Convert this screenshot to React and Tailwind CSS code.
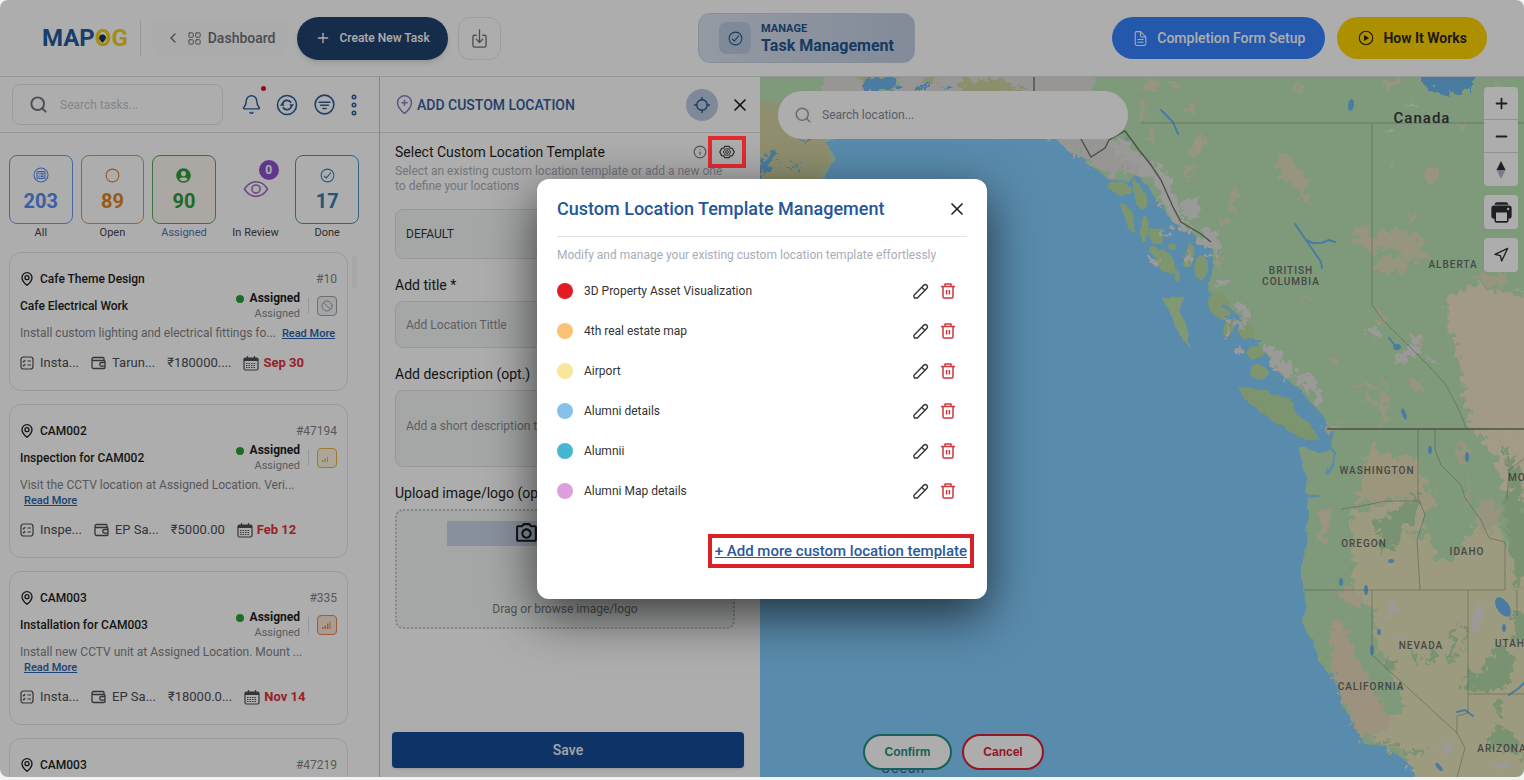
import React, { useState } from 'react';
import { Ban, Bell, ChevronLeft, Info, LayoutGrid, Locate, MapPin, MapPinPlusInside, Minus, Navigation, Plus, Search, X } from 'lucide-react';
import {
    IoCheckmarkCircleOutline,
    IoDocumentTextOutline,
    IoDownloadOutline,
    IoEllipseOutline,
    IoEyeOutline,
    IoFilterCircleOutline,
    IoPlayCircleOutline,
    IoPrint,
} from 'react-icons/io5';
import { FaUserCircle } from 'react-icons/fa';
import { MdOutlineCameraAlt } from 'react-icons/md';

const stats = [
    { label: 'All', count: 203, color: 'text-[#5b8def]', border: 'border-[#6c9ae6]', icon: 'list' },
    { label: 'Open', count: 89, color: 'text-[#e08428]', border: 'border-[#e2954f]', icon: 'open' },
    { label: 'Assigned', count: 90, color: 'text-[#2f9e3a]', border: 'border-[#54a85c] bg-[#fdf6f0]', icon: 'user', active: true },
    { label: 'In Review', count: 0, color: 'text-[#a070c8]', border: 'border-transparent', icon: 'eye' },
    { label: 'Done', count: 17, color: 'text-[#337fb5]', border: 'border-[#4a92be]', icon: 'check' },
];

const tasks = [
    { place: 'Cafe Theme Design', id: '#10', title: 'Cafe Electrical Work', desc: 'Install custom lighting and electrical fittings fo...', inline: true, type: 'Insta...', owner: 'Tarun...', cost: '₹180000....', date: 'Sep 30', priority: 'none' },
    { place: 'CAM002', id: '#47194', title: 'Inspection for CAM002', desc: 'Visit the CCTV location at Assigned Location. Veri...', type: 'Inspe...', owner: 'EP Sa...', cost: '₹5000.00', date: 'Feb 12', priority: 'medium' },
    { place: 'CAM003', id: '#335', title: 'Installation for CAM003', desc: 'Install new CCTV unit at Assigned Location. Mount ...', type: 'Insta...', owner: 'EP Sa...', cost: '₹18000.0...', date: 'Nov 14', priority: 'high' },
    { place: 'CAM003', id: '#47219' },
];

const templates = [
    { name: '3D Property Asset Visualization', dot: 'bg-[#e31b23]' },
    { name: '4th real estate map', dot: 'bg-[#f9c274]' },
    { name: 'Airport', dot: 'bg-[#f9e59c]' },
    { name: 'Alumni details', dot: 'bg-[#85c1e9]' },
    { name: 'Alumnii', dot: 'bg-[#45b7d1]' },
    { name: 'Alumni Map details', dot: 'bg-[#dda0dd]' },
];

const SyncCircleIcon = () => (
    <svg width="22" height="22" viewBox="0 0 22 22" fill="none" stroke="currentColor" strokeWidth="1.6">
        <circle cx="11" cy="11" r="9.5" />
        <path d="M6.5 10.500a4.600 4.600 0 0 1 8.600-1.800M15.500 11.500a4.600 4.600 0 0 1-8.600 1.800" strokeWidth="1.8" />
        <path d="M13.300 10.300h4.900l-2.400 3zM8.700 11.700H3.800l2.400-3z" fill="currentColor" stroke="none" />
    </svg>
);

const DotsIcon = () => (
    <svg width="6" height="22" viewBox="0 0 6 22" fill="none" stroke="currentColor" strokeWidth="1.6">
        <circle cx="3" cy="3" r="1.700" />
        <circle cx="3" cy="11" r="1.700" />
        <circle cx="3" cy="19" r="1.700" />
    </svg>
);

const ListCircleIcon = () => (
    <svg width="16" height="16" viewBox="0 0 16 16" fill="none" stroke="currentColor" strokeWidth="1.100">
        <circle cx="8" cy="8" r="7" />
        <rect x="4" y="4.600" width="8" height="6.800" rx="1" />
        <path d="M5.500 6.500h1M7.500 6.500h3.200M5.500 8h1M7.500 8h3.200M5.500 9.500h1M7.500 9.500h3.200" />
    </svg>
);

const ChecklistIcon = () => (
    <svg width="14" height="14" viewBox="0 0 14 14" fill="none" stroke="currentColor" strokeWidth="1.200" className="shrink-0">
        <rect x="1" y="1" width="12" height="12" rx="2.500" />
        <path d="M3 5l.8.8 1.500-1.600M3 9l.8.8 1.500-1.600M7.500 5H11M7.500 9H11" />
    </svg>
);

const WalletIcon = () => (
    <svg width="15" height="14" viewBox="0 0 15 14" fill="none" stroke="currentColor" strokeWidth="1.300" className="shrink-0">
        <path d="M13 4V2.500a1 1 0 0 0-1-1H2.500a1.500 1.500 0 0 0 0 3H13a1 1 0 0 1 1 1v6a1 1 0 0 1-1 1H2.500A1.500 1.500 0 0 1 1 11V3" />
        <path d="M14 6.500h-3.500a1.800 1.800 0 0 0 0 3.600H14" />
    </svg>
);

const CalendarIcon = () => (
    <svg width="16" height="15" viewBox="0 0 16 15" fill="none" stroke="currentColor" strokeWidth="1.200" className="shrink-0">
        <rect x="1" y="2" width="14" height="12" rx="1.500" />
        <path d="M1.500 2.500h13v2h-13z" fill="currentColor" />
        <path d="M4.500 0v3M11.500 0v3" />
        <path d="M3 7.500h10M3 9.500h10M3 11.500h10" strokeDasharray="1.500 1" strokeWidth="1" />
    </svg>
);

const PinIcon = () => (
    <svg width="14" height="14" viewBox="0 0 14 14" fill="none" stroke="currentColor" strokeWidth="1.300" className="shrink-0">
        <path d="M7 13.300C4.500 11.200 2 8.700 2 5.700a5 5 0 0 1 10 0c0 3-2.500 5.500-5 7.600z" />
        <circle cx="7" cy="5.700" r="2" />
    </svg>
);

const GearIcon = () => (
    <svg width="16" height="16" viewBox="0 0 16 16" fill="none" stroke="currentColor" strokeWidth="1.300" strokeLinejoin="round">
        <path d="M5.800 2.300h4.400l1 1.900 2.100.1 1.900 3.700-1.900 3.700-2.100.1-1 1.900H5.800l-1-1.900-2.100-.1L.8 8l1.900-3.700 2.100-.1z" />
        <path d="M6.200 4.900h3.600L11.600 8l-1.800 3.100H6.200L4.400 8z" strokeWidth="1" />
        <circle cx="8" cy="8" r="1.400" strokeWidth="1" />
    </svg>
);

const PencilIcon = () => (
    <svg width="16" height="16" viewBox="0 0 16 16" fill="none" stroke="currentColor" strokeWidth="1.400" strokeLinejoin="round">
        <path d="M1 12.200l9.700-10a2.200 2.200 0 0 1 3.200 3.100L4.300 15H2.200A1.200 1.200 0 0 1 1 13.800z" />
        <path d="M8.700 4.300l3.200 3.100" />
    </svg>
);

const TrashIcon = () => (
    <svg width="14" height="16" viewBox="0 0 14 16" fill="none" stroke="currentColor" strokeWidth="1.500" strokeLinejoin="round">
        <path d="M0 3.500h14M2 3.500V14a1 1 0 0 0 1 1h8a1 1 0 0 0 1-1V3.500M4 3.500V1h6v2.500M5.600 7v4.500M8.400 7v4.500" />
    </svg>
);

const StatIcon = ({ name }) => {
    if (name === 'list') return <ListCircleIcon />;
    if (name === 'open') return <IoEllipseOutline size={17} />;
    if (name === 'user') return <FaUserCircle size={15} />;
    return <IoCheckmarkCircleOutline size={17} />;
};

const PriorityBadge = ({ level }) => {
    if (level === 'none') {
        return (
            <span className="flex size-5 items-center justify-center rounded border border-[#a0a3a8] bg-[#f2f3f5] text-[#a0a3a8]">
                <Ban size={12} />
            </span>
        );
    }
    const tone = level === 'high' ? 'border-[#e58a55] bg-[#fce6d8] text-[#e58a55]' : 'border-[#e6b548] bg-[#fdf5df] text-[#e6b548]';
    return (
        <span className={`flex size-5 items-center justify-center rounded border ${tone}`}>
            <svg width="12" height="12" viewBox="0 0 12 12" fill="currentColor">
                <rect x="1" y="8" width="1.500" height="2" />
                <rect x="3.500" y="6.500" width="1.500" height="3.500" />
                {level === 'high' ? <rect x="6" y="4.500" width="1.500" height="5.500" /> : <rect x="6" y="5" width="1" height="5" />}
                {level === 'high' && <rect x="8.500" y="2.500" width="1" height="7.500" />}
            </svg>
        </span>
    );
};

const TaskCard = ({ task }) => (
    <article className="shrink-0 rounded-xl border border-[#e3e5e8] px-[10px] pt-[18px] pb-[17px] text-[#1c1e21]">
        <div className="flex h-4 items-center">
            <PinIcon />
            <h3 className="ml-1.5 flex-1 text-xs font-medium">{task.place}</h3>
            <span className="text-xs text-[#7f8287]">{task.id}</span>
        </div>
        {task.title && (
            <>
                <div className="mt-1 flex items-center">
                    <p className="flex-1 text-xs font-medium">{task.title}</p>
                    <div className="text-right leading-[15px]">
                        <p className="flex items-center justify-end gap-1.5 text-xs leading-[15px] font-bold">
                            <span className="size-2 rounded-full bg-[#2ba335]" />
                            Assigned
                        </p>
                        <p className="text-[11px] text-[#85888c]">Assigned</p>
                    </div>
                    <span className="mx-2 h-4 w-px bg-[#dcdfe3]" />
                    <PriorityBadge level={task.priority} />
                </div>
                <p className="mt-[5px] text-xs leading-[15px] whitespace-nowrap text-[#7f8287]">
                    {task.desc}
                    {!task.inline && <br />}
                    <a href="#read-more" className={`text-[11px] font-medium text-[#2b62ad] underline ${task.inline ? 'ml-1.5' : 'ml-1'}`}>Read More</a>
                </p>
                <div className="mt-3 flex h-5 items-center text-[13px] text-[#4b4e55]">
                    <ChecklistIcon />
                    <span className="mr-3 ml-1.5">{task.type}</span>
                    <WalletIcon />
                    <span className="mr-3 ml-1.5">{task.owner}</span>
                    <span className="mr-3">{task.cost}</span>
                    <CalendarIcon />
                    <span className="ml-1 font-bold text-[#e0323a]">{task.date}</span>
                </div>
            </>
        )}
    </article>
);

// Pale snow fields and bare ground along the ranges: x, y, rx, ry, rotation
const snow = [
    [1120, 150, 16, 7, 40], [1144, 165, 14, 8, 45], [1162, 182, 15, 8, 60], [1170, 205, 16, 8, 65], [1190, 210, 9, 11, 0],
    [1182, 226, 12, 4, 30], [1207, 238, 8, 14, 0], [1215, 245, 5, 9, 0], [1187, 260, 3, 5, 40], [1165, 233, 5, 3, 30], [1220, 282, 6, 5, 20],
    [1243, 312, 4, 12, 145], [1242, 325, 3, 5, 140], [1274, 358, 7, 14, 155], [1286, 371, 5, 9, 0], [1300, 378, 8, 6, 30], [1310, 384, 7, 9, 0],
    [1317, 395, 5, 8, 160], [1410, 350, 7, 6, 0], [1402, 358, 4, 7, 20], [1372, 332, 5, 6, 0], [1416, 340, 6, 4, 0],
    [1432, 362, 4, 3, 0], [1090, 128, 22, 8, 20], [1476, 618, 5, 16, 0], [1412, 105, 5, 2, 0], [1390, 131, 4, 2, 0],
    [1445, 748, 7, 4, 20], [1500, 764, 6, 4, 0], [1389, 610, 3, 8, 25], [1395, 637, 4, 3, 0], [1155, 262, 3, 6, 140], [1240, 350, 3, 6, 0], [1225, 330, 2, 6, 0],
];
const sand = [
    [1286, 168, 9, 14, 155], [1298, 182, 7, 12, 160], [1304, 200, 3, 7, 165], [1188, 172, 5, 7, 0], [1196, 148, 4, 14, 30], [1190, 108, 4, 7, 30],
    [1360, 232, 7, 11, 140], [1372, 244, 18, 8, 5], [1400, 240, 22, 10, 10], [1412, 254, 12, 10, 0], [1388, 265, 16, 7, 0],
    [1430, 176, 9, 8, 130], [1411, 217, 3, 7, 0], [1387, 160, 4, 3, 0], [1464, 127, 5, 3, 0], [1299, 90, 3, 7, 0],
    [1383, 405, 3, 24, 5], [1364, 387, 13, 3, 0], [1368, 400, 7, 4, 0], [1332, 427, 10, 4, 0], [1306, 299, 5, 2, 0],
    [1490, 280, 18, 6, 10], [1390, 84, 10, 5, 150], [1150, 86, 8, 5, 0], [1380, 320, 4, 6, 0], [1415, 385, 3, 9, 150], [1418, 340, 6, 6, 0],
    [1463, 452, 6, 10, 0], [1488, 515, 12, 18, 10], [1467, 490, 2, 14, 0], [1232, 200, 3, 12, 10], [1224, 220, 4, 5, 0], [1218, 262, 3, 5, 0],
    [1176, 87, 8, 3, 0], [1142, 110, 3, 10, 0], [1150, 134, 3, 10, 10], [1332, 360, 2, 6, 0], [1497, 92, 3, 8, 0], [1240, 322, 6, 4, 30],
];
const coastalIslands = [
    [1118, 188, 12, 7, 20], [1138, 195, 6, 14, 160], [1128, 218, 4, 16, 160], [1144, 228, 4, 12, 0], [1155, 236, 6, 9, 150],
    [1165, 262, 7, 14, 150], [1188, 256, 5, 12, 10], [1200, 268, 6, 11, 0], [1154, 252, 4, 8, 150], [1172, 246, 5, 4, 0],
    [1176, 276, 3, 6, 0], [1218, 305, 10, 14, 150], [1228, 328, 5, 10, 0], [1246, 332, 8, 8, 30], [1254, 352, 9, 7, 0],
    [1258, 372, 9, 8, 0],
];
const lakes = [
    [1350, 105, 3, 6, 10], [1502, 607, 6, 11, 145], [1503, 628, 2, 4, 0], [1390, 561, 3, 2, 0], [1365, 590, 2, 5, 0], [1378, 632, 2, 3, 0],
    [1371, 650, 2, 5, 0], [1429, 450, 2, 4, 0], [1466, 457, 2, 5, 0], [1438, 767, 2, 5, 140], [1396, 347, 4, 3, 0], [1403, 414, 2, 6, 160], [1340, 582, 2, 4, 0],
];
const labels = [
    ['BRITISH', 1290, 274], ['COLUMBIA', 1290, 285], ['ALBERTA', 1452, 268], ['WASHINGTON', 1376, 474], ['OREGON', 1363, 547],
    ['IDAHO', 1466, 555], ['NEVADA', 1420, 649], ['CALIFORNIA', 1370, 690], ['ARIZONA', 1501, 752],
];

const Blobs = ({ items, fill }) => (
    <g fill={fill}>
        {items.map(([x, y, rx, ry, r]) => (
            <ellipse key={`${x}-${y}`} cx={x} cy={y} rx={rx} ry={ry} transform={`rotate(${r} ${x} ${y})`} />
        ))}
    </g>
);

const MapCanvas = () => (
    <svg className="absolute inset-0 size-full" viewBox="759 77 765 700" preserveAspectRatio="xMinYMin slice" aria-label="Map of western North America">
        <defs>
            <filter id="rough" x="-2%" y="-2%" width="104%" height="104%">
                <feTurbulence type="fractalNoise" baseFrequency="0.13" numOctaves="4" seed="7" />
                <feDisplacementMap in="SourceGraphic" scale="20" xChannelSelector="R" yChannelSelector="G" />
            </filter>
            <filter id="coast" x="-2%" y="-2%" width="104%" height="104%">
                <feTurbulence type="fractalNoise" baseFrequency="0.08" numOctaves="3" seed="3" />
                <feDisplacementMap in="SourceGraphic" scale="7" xChannelSelector="R" yChannelSelector="G" />
            </filter>
        </defs>
        <rect x="759" y="77" width="765" height="700" fill="#84cdff" />
        <g filter="url(#coast)">
            {/* Mainland */}
            <path d="M750 60H1540V790H1417L1412 769 1400 758 1385 747 1362 744 1358 730 1342 706 1337 690 1330 676 1318 660 1310 637 1302 622 1304 606 1300 570 1306 545 1307 500 1305 475 1297 447 1318 452 1330 450 1330 430 1318 412 1300 390 1285 378 1264 354 1250 336 1240 318 1225 306 1207 288 1213 262 1210 246 1194 234 1174 222 1158 206 1148 186 1136 176 1128 182 1106 177 1090 165 1072 149 1052 136 900 120 840 134 824 142 834 158 820 184H750Z" fill="#bbe3b6" />
            <path d="M1238 386 1262 390 1288 398 1296 415 1310 425 1318 441 1298 437 1270 420 1248 403Z" fill="#b9dca2" />
            <path d="M1161 297 1182 298 1178 312 1184 325 1187 337 1191 349 1178 335 1170 318Z" fill="#bfe0a8" />
            <Blobs items={coastalIslands} fill="#bbdca2" />
            <g fill="none" stroke="#84cdff" strokeLinecap="round" strokeLinejoin="round" strokeWidth="2.500">
                <path d="M1125 138 1130 158 1140 180 1148 196 1152 208M1210 250 1212 262 1206 272 1200 282M1150 216 1162 226 1170 240 1182 244M1160 206 1176 228 1196 240M1222 304 1232 312 1240 324M1238 346 1246 340 1258 342M1248 363 1256 360 1264 362M1256 387 1270 390 1284 392 1296 404 1308 416 1320 424 1328 438" />
                <path d="M1332 431 1328 446 1334 452 1332 464 1326 474M1306 496H1316M1330 674 1342 673M1332 676 1338 686" />
            </g>
        </g>
        <g filter="url(#rough)">
            {/* Alaska */}
            <path d="M750 106 800 104 835 110 822 142 832 156 815 186H750Z" fill="#d3d3a4" />
            <path d="M830 70 880 70 870 100 815 98ZM905 70H1100L1085 100H890ZM1048 134 1095 126 1132 148 1150 178 1135 176 1120 168 1110 178 1090 164Z" fill="#dfdddc" />
            <path d="M862 70H896L890 88 858 84ZM960 78 1000 80 1030 92 960 94ZM920 78 940 76 930 86Z" fill="#cdd3a0" />
            <path d="M868 78 892 77 896 90 862 92ZM914 90 926 82 924 90ZM938 90 950 84 946 90Z" fill="#6db7ee" />
            <path d="M759 158 778 152 770 170 759 178ZM786 163 800 165 797 170ZM793 138H815L800 142Z" fill="#6db7ee" />
            {/* Prairies */}
            <path d="M1446 300 1470 284 1490 290 1512 294 1550 286V436H1475L1465 410 1462 385 1456 350 1448 325Z" fill="#efe4c6" />
            {/* Columbia plateau and the Great Basin */}
            <path d="M1372 445 1388 456 1420 460 1422 484 1437 498 1428 512 1405 498 1375 502 1356 505 1362 470Z" fill="#e6ddb9" />
            <path d="M1350 512 1400 500 1425 508 1420 530 1405 532 1424 540 1428 534 1436 560 1450 560 1462 545 1480 512 1498 522 1504 545 1550 540V800H1425L1404 756 1372 740 1362 715 1398 715 1404 702 1378 654 1372 610 1352 588 1352 560 1350 540Z" fill="#e6e4bb" />
            <path d="M1480 430H1550V500L1508 506 1500 480 1490 450Z" fill="#efe5c4" />
            <path d="M1330 622 1342 616 1352 648 1372 690 1392 728 1362 738 1345 706 1330 672Z" fill="#e6d7b8" />
            <path d="M1318 512 1330 506 1326 534 1319 545ZM1330 590 1360 592 1362 606 1342 600Z" fill="#e6dabb" />
            {/* Forests inside the basin */}
            <path d="M1370 524 1395 510 1415 494 1420 505 1412 520 1402 528 1398 544 1380 552 1378 532ZM1500 440 1518 470 1530 560 1516 590 1508 540 1502 505 1510 485ZM1488 656 1504 642 1514 660 1506 690 1480 692 1462 688 1466 664 1476 680ZM1512 612 1530 610V640L1512 640ZM1496 726 1510 730 1524 760 1504 750 1484 742ZM1496 700 1500 698 1502 716 1494 714ZM1450 632 1456 626 1454 664 1448 662ZM1462 628 1466 626 1464 652ZM1413 650 1418 658 1412 664ZM1430 650 1434 656 1426 668ZM1398 752 1424 750 1422 756ZM1375 740 1400 744 1396 750ZM1384 660 1396 662 1394 672 1382 670Z" fill="#b3d9a8" />
            <Blobs items={sand} fill="#dfdcb8" />
            <Blobs items={snow} fill="#e3e5e2" />
            <path d="M1412 70H1474V90L1446 96 1428 90Z" fill="#6db7ee" />
        </g>
        <g fill="none" stroke="#6db7ee" strokeLinecap="round" strokeLinejoin="round" strokeWidth="2">
            <path d="M1160 110 1172 122 1177 134M1294 224 1305 240 1312 250 1320 262 1321 268M1305 240 1312 243 1320 243 1328 240 1334 242M1388 338 1396 348M1456 712 1464 710 1472 716M1508 695 1518 688 1526 680" />
        </g>
        <Blobs items={lakes} fill="#6db7ee" />
        {/* Borders */}
        <g fill="none" stroke="#6f7768" strokeWidth="1">
            <path d="M1033 77V92M1080 139 1090 157 1104 148 1108 140 1124 131 1138 150 1150 165 1160 180 1172 207 1180 222 1200 234 1210 242" strokeWidth="1.400" />
            <path d="M1326 429H1524" strokeWidth="1.600" />
            <path d="M1140 123H1524M1371 124V305L1382 320 1398 336 1430 368 1445 385 1458 410 1466 430M1340 509 1360 506 1385 501H1417M1417 430V498L1424 515 1416 540 1419 590M1303 590H1504V542L1488 538 1480 520 1464 498 1460 485 1440 465 1434 450V430M1371 590V655L1456 733M1467 590V713L1456 716V733L1464 748 1456 777M1516 590V616M1467 694H1524M1506 500 1508 470 1524 458" opacity=".45" />
        </g>
        <g fill="#666b66" fontFamily="Roboto, sans-serif" fontSize="10" fontWeight="500" letterSpacing="1" textAnchor="middle">
            {labels.map(([text, x, y]) => (
                <text key={text} x={x} y={y}>{text}</text>
            ))}
            <text x="1494" y="647" textAnchor="start">UTAH</text>
            <text x="1507" y="481" textAnchor="start">MONTANA</text>
        </g>
        <text x="1421" y="123" fill="#34383c" fontFamily="Roboto, sans-serif" fontSize="15" fontWeight="500" letterSpacing="1" textAnchor="middle">Canada</text>
        <text x="902" y="773" fill="#32608c" fontFamily="Roboto, sans-serif" fontSize="14" letterSpacing="1" textAnchor="middle">Ocean</text>
    </svg>
);

const TemplateModal = ({ onClose }) => (
    <div className="absolute inset-0 z-50 flex items-center justify-center">
        <div role="dialog" aria-labelledby="modal-title" className="flex min-h-[420px] w-[450px] flex-col rounded-xl bg-white px-5 pt-3 shadow-[0_16px_50px_rgba(0,0,0,0.65)]">
            <div className="flex h-[46px] items-center justify-between border-b border-[#dfe1e5] pb-3">
                <h2 id="modal-title" className="mt-1 text-lg font-medium text-[#24569b]">Custom Location Template Management</h2>
                <button type="button" aria-label="Close" onClick={onClose} className="mt-1 text-[#222]">
                    <X size={20} />
                </button>
            </div>
            <p className="mt-2.5 text-xs leading-4 text-[#a9adb8]">Modify and manage your existing custom location template effortlessly</p>
            <ul className="mt-2">
                {templates.map((item) => (
                    <li key={item.name} className="flex h-10 items-center pr-3">
                        <span className={`size-4 rounded-full ${item.dot}`} />
                        <span className="ml-[11px] flex-1 text-xs text-[#333]">{item.name}</span>
                        <button type="button" aria-label={`Edit ${item.name}`} className="mr-3 text-[#333]"><PencilIcon /></button>
                        <button type="button" aria-label={`Delete ${item.name}`} className="text-[#d2353b]"><TrashIcon /></button>
                    </li>
                ))}
            </ul>
            <a href="#add-template" className="mt-[30px] self-end text-[15px] leading-5 font-medium text-[#2a5a9c] underline outline-4 outline-offset-3 outline-[#d92127]">+ Add more custom location template</a>
        </div>
    </div>
);

const App = () => {
    const [isOpen, setIsOpen] = useState(true);

    return (
        <div className="h-screen overflow-hidden bg-[#f1f3f4] pb-[3px] font-[Roboto,sans-serif]">
            <div className="relative flex h-full flex-col overflow-hidden rounded-lg bg-white">
                <header className="flex h-[77px] shrink-0 items-center justify-between border-b border-[#dddfe2] pr-[37px] pl-[42px]">
                    <div className="flex items-center">
                        <div className="relative pr-3 text-2xl leading-9 font-bold text-[#275ba4]">
                            MAP<span className="text-[#f4cf1c]">OG</span>
                            <MapPin size={9} className="absolute top-3.5 right-[33px] fill-[#1b2f4d] text-[#1b2f4d]" />
                        </div>
                        <span className="h-9 w-px bg-[#dddfe2]" />
                        <a href="#dashboard" className="mr-2.5 ml-3 flex h-9 items-center rounded-lg bg-[#fcfdfd] px-3 text-sm font-medium text-[#6d7075]">
                            <ChevronLeft size={16} />
                            <LayoutGrid size={15} strokeWidth={1.6} className="mr-1.5 ml-1.5" />
                            Dashboard
                        </a>
                        <button type="button" className="flex h-[43px] items-center gap-2 rounded-full bg-[#1f416f] px-[18px] text-xs font-medium text-white shadow-md">
                            <Plus size={16} />
                            Create New Task
                        </button>
                        <button type="button" aria-label="Import" className="ml-2.5 flex size-[43px] items-center justify-center rounded-xl border border-[#e6e8ea] text-[#6d7075]">
                            <IoDownloadOutline size={21} />
                        </button>
                    </div>
                    <div className="flex h-[50px] items-center gap-2.5 rounded-xl border border-[#c9d3e0] bg-linear-to-r from-[#dce4ef] to-[#bfcde2] px-5">
                        <span className="flex size-8 items-center justify-center rounded-lg bg-[#bccbe0] text-[#24548f]">
                            <IoCheckmarkCircleOutline size={17} />
                        </span>
                        <div className="text-[#24548f]">
                            <p className="text-[11px] leading-4 font-bold">MANAGE</p>
                            <h1 className="text-base leading-[18px] font-bold">Task Management</h1>
                        </div>
                    </div>
                    <div className="flex items-center gap-3">
                        <button type="button" className="flex h-[42px] items-center gap-2 rounded-full bg-[#3582ff] px-5 text-sm font-medium text-white">
                            <IoDocumentTextOutline size={17} />
                            Completion Form Setup
                        </button>
                        <button type="button" className="flex h-[42px] items-center gap-2 rounded-full bg-[#ffd400] px-5 text-sm font-bold text-[#33291a]">
                            <IoPlayCircleOutline size={18} />
                            How It Works
                        </button>
                    </div>
                </header>

                <div className="flex min-h-0 flex-1">
                    {/* Task list */}
                    <aside className="flex w-[380px] shrink-0 flex-col border-r border-[#c4c6c9]">
                        <div className="flex h-14 shrink-0 items-center border-b border-[#dfe1e4] pr-[22px] pl-3 text-[#2f5d9d]">
                            <label className="flex h-[41px] w-[211px] items-center gap-3 rounded-lg border border-[#e3e5e8] px-4">
                                <Search size={19} strokeWidth={2.500} className="shrink-0 text-[#70747c]" />
                                <input type="text" aria-label="Search tasks" placeholder="Search tasks..." className="w-full min-w-0 text-xs outline-none placeholder:text-[#c4c7cb]" />
                            </label>
                            <div className="flex flex-1 items-center justify-between pl-[18px]">
                                <button type="button" aria-label="Notifications" className="relative">
                                    <Bell size={21} strokeWidth={1.7} />
                                    <span className="absolute -top-2 -right-1 size-[5px] rounded-full bg-[#d8121b]" />
                                </button>
                                <button type="button" aria-label="Refresh"><SyncCircleIcon /></button>
                                <button type="button" aria-label="Filter"><IoFilterCircleOutline size={25} /></button>
                                <button type="button" aria-label="More"><DotsIcon /></button>
                            </div>
                        </div>
                        <div className="mt-[22px] mr-5 ml-[9px] grid grid-cols-5 gap-2 text-center">
                            {stats.map((stat) => (
                                <button type="button" key={stat.label}>
                                    <span className={`flex h-[69px] flex-col items-center rounded-lg border ${stat.border} ${stat.color}`}>
                                        {stat.icon === 'eye' ? (
                                            <span className="relative mt-5">
                                                <IoEyeOutline size={26} />
                                                <span className="absolute -top-4 left-4 flex size-5 items-center justify-center rounded-full bg-[#8f52cf] text-xs font-bold text-white">{stat.count}</span>
                                            </span>
                                        ) : (
                                            <>
                                                <span className="mt-2.5 flex h-[18px] items-center"><StatIcon name={stat.icon} /></span>
                                                <span className="mt-[3px] text-xl leading-7 font-bold">{stat.count}</span>
                                            </>
                                        )}
                                    </span>
                                    <span className={`block pt-px text-[11px] leading-4 ${stat.active ? 'text-[#4d78b5]' : 'text-[#444]'}`}>{stat.label}</span>
                                </button>
                            ))}
                        </div>
                        <div className="mt-[11px] flex min-h-0 flex-1 overflow-hidden pr-[22px] pl-[9px]">
                            <div className="flex min-w-0 flex-1 flex-col gap-[13px]">
                                {tasks.map((task) => (
                                    <TaskCard key={task.id} task={task} />
                                ))}
                            </div>
                            <span className="mt-1 ml-1 h-8 w-[5px] rounded-full bg-[#f7f7f7]" />
                        </div>
                    </aside>

                    {/* Custom location form */}
                    <form className="flex w-[380px] shrink-0 flex-col text-[#1c1e21]" onSubmit={(e) => e.preventDefault()}>
                        <div className="flex h-14 shrink-0 items-center border-b border-[#dfe1e4] pr-2.5 pl-3.5">
                            <MapPinPlusInside size={21} strokeWidth={1.7} className="text-[#8d7cc4]" />
                            <h2 className="ml-0.5 flex-1 text-sm font-medium text-[#305d9d]">ADD CUSTOM LOCATION</h2>
                            <button type="button" aria-label="Use my location" className="mr-3 flex size-8 items-center justify-center rounded-full bg-[#bccbe3] text-[#24548f]">
                                <Locate size={18} strokeWidth={1.8} />
                            </button>
                            <button type="button" aria-label="Close panel"><X size={20} /></button>
                        </div>
                        <div className="flex flex-1 flex-col pr-[25px] pl-[15px]">
                            <div className="mt-[9px] flex h-5 items-center">
                                <label htmlFor="template" className="flex-1 text-sm">Select Custom Location Template</label>
                                <Info size={14} className="mr-3 text-[#777a80]" />
                                <button type="button" aria-label="Manage templates" onClick={() => setIsOpen(true)} className="relative text-[#444]">
                                    <GearIcon />
                                    <span className="absolute -inset-x-[11px] -inset-y-2 z-50 border-4 border-[#e32a2f]" />
                                </button>
                            </div>
                            <p className="mt-0.5 text-xs leading-[15px] text-[#a9aeb7]">Select an existing custom location template or add a new one to define your locations</p>
                            <select id="template" className="mt-[15px] h-[50px] appearance-none rounded-lg border border-[#dee2e1] bg-[#f3f7f6] px-2.5 text-xs text-[#33363a]">
                                <option>DEFAULT</option>
                            </select>
                            <label htmlFor="title" className="mt-4 text-sm">Add title *</label>
                            <input id="title" type="text" placeholder="Add Location Tittle" className="mt-1.5 h-[47px] rounded-lg border border-[#dee2e1] bg-[#f3f7f6] px-2.5 text-xs placeholder:text-[#8a8e91]" />
                            <label htmlFor="description" className="mt-4 text-sm">Add description (opt.)</label>
                            <textarea id="description" placeholder="Add a short description to your location" className="mt-1.5 h-[77px] resize-none rounded-lg border border-[#dee2e1] bg-[#f3f7f6] px-2.5 pt-[27px] text-xs placeholder:text-[#8a8e91]" />
                            <span className="mt-4 text-sm">Upload image/logo (opt.)</span>
                            <button type="button" className="mt-1.5 flex h-[120px] flex-col items-center justify-between rounded-lg border-2 border-dotted border-[#c3c7c8] bg-[#f3f7f6] py-2.5">
                                <span className="flex h-[25px] w-[237px] items-center bg-[#cbd5e8] pl-[67px]"><MdOutlineCameraAlt size={25} /></span>
                                <span className="text-xs text-[#777b7f]">Drag or browse image/logo</span>
                            </button>
                        </div>
                        <button type="submit" className="mr-4 mb-[9px] ml-3 h-9 shrink-0 rounded bg-[#164c99] text-sm font-medium text-[#f2f4f8] shadow">Save</button>
                    </form>

                    {/* Map */}
                    <main className="relative min-w-0 flex-1 overflow-hidden">
                        <MapCanvas />
                        <label className="absolute top-3.5 left-[18px] flex h-12 w-[350px] items-center gap-2.5 rounded-full bg-white px-4">
                            <Search size={18} className="shrink-0 text-[#9a9ea8]" />
                            <input type="text" aria-label="Search location" placeholder="Search location..." className="w-full text-xs outline-none placeholder:text-[#858993]" />
                        </label>
                        <div className="absolute top-2.5 right-1.5 flex flex-col gap-[9px] text-[#2d2f33]">
                            <div className="flex w-[34px] flex-col divide-y divide-[#d5d7da] overflow-hidden rounded bg-white">
                                <button type="button" aria-label="Zoom in" className="flex h-[33px] items-center justify-center"><Plus size={17} strokeWidth={2.500} /></button>
                                <button type="button" aria-label="Zoom out" className="flex h-[33px] items-center justify-center"><Minus size={17} strokeWidth={2.500} /></button>
                                <button type="button" aria-label="Reset north" className="flex h-[33px] items-center justify-center">
                                    <svg width="10" height="20" viewBox="0 0 10 20">
                                        <path d="M5 1L9.500 10H.5z" fill="#2d2f33" />
                                        <path d="M5 19L9.500 10H.5z" fill="#b3b6c6" />
                                    </svg>
                                </button>
                            </div>
                            <button type="button" aria-label="Print" className="flex h-[34px] w-[34px] items-center justify-center rounded bg-white"><IoPrint size={25} /></button>
                            <button type="button" aria-label="Locate" className="flex h-[34px] w-[34px] items-center justify-center rounded bg-white"><Navigation size={16} /></button>
                        </div>
                        <div className="absolute bottom-[7px] left-[103px] flex gap-2.5 font-['Liberation_Sans',sans-serif] text-xs font-bold">
                            <button type="button" className="h-9 w-[89px] rounded-full border-2 border-[#248f80] bg-white text-[#248f80]">Confirm</button>
                            <button type="button" className="h-9 w-[82px] rounded-full border-2 border-[#dc1f32] bg-white text-[#dc1f32]">Cancel</button>
                        </div>
                    </main>
                </div>

                {isOpen && (
                    <>
                        <div className="absolute inset-0 z-40 bg-black/32" onClick={() => setIsOpen(false)} />
                        <TemplateModal onClose={() => setIsOpen(false)} />
                    </>
                )}
            </div>
        </div>
    );
};

export default App;
